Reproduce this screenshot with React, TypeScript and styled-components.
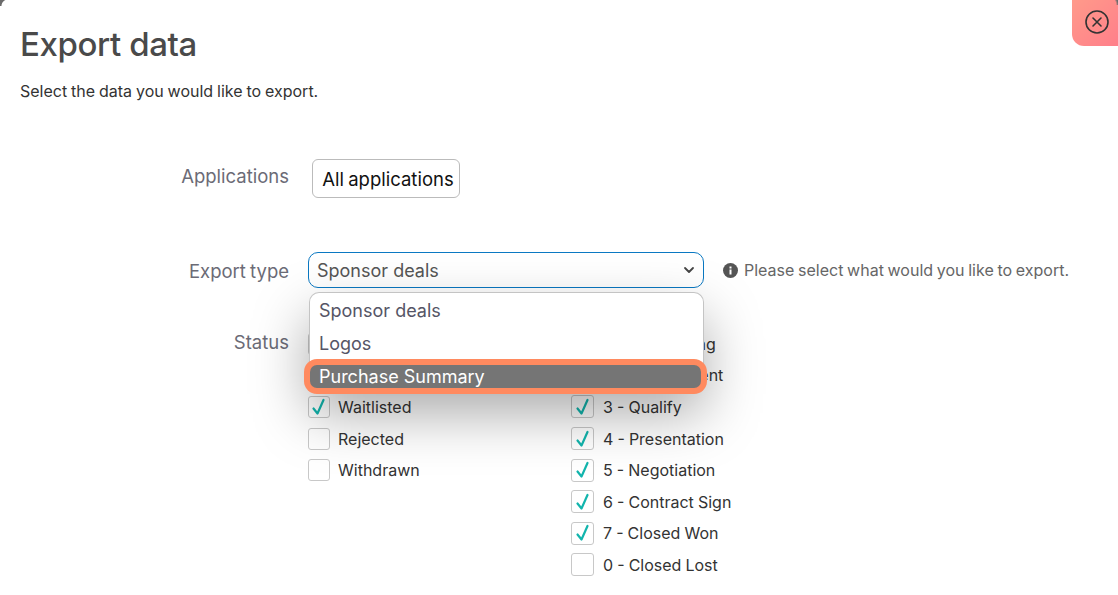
import React from 'react';
import styled, { createGlobalStyle } from 'styled-components';

const GlobalStyle = createGlobalStyle`
    html, body {
        margin: 0;
        padding: 0;
        height: 100%;
        background: #fff;
        overflow: hidden;
    }
    * {
        box-sizing: border-box;
    }
    body {
        font-family: Inter, "Liberation Sans", sans-serif;
    }
`;

const Modal = styled.div`
    position: relative;
    width: 1118px;
    height: 595px;
    background: #fff;
    overflow: hidden;
    padding: 22px 20px 0;

    &::before {
        content: '';
        position: absolute;
        top: 0;
        left: 0;
        width: 8px;
        height: 6px;
        background: radial-gradient(circle at 100% 100%, transparent 6px, #6b6b6b 7px);
    }
`;

const CloseButton = styled.button`
    position: absolute;
    top: 0;
    right: 0;
    width: 46px;
    height: 46px;
    border: 0;
    padding: 0 0 2px 4px;
    border-radius: 0 0 0 12px;
    background: linear-gradient(135deg, #ff9a8a 0%, #ff7f8a 100%);
    display: flex;
    align-items: center;
    justify-content: center;

    &::after {
        content: '';
        position: absolute;
        top: 0;
        right: 0;
        width: 10px;
        height: 5px;
        background: radial-gradient(circle at 0 100%, transparent 8px, #6b6b6b 10px);
    }
`;

const Title = styled.h1`
    margin: 0;
    font-size: 33px;
    line-height: 44px;
    font-weight: 500;
    letter-spacing: -0.4px;
    color: #4a4a4a;
`;

const Subtitle = styled.p`
    margin: 14px 0 0;
    font-size: 16px;
    line-height: 22px;
    word-spacing: -0.6px;
    color: #333;
`;

const Form = styled.div`
    margin-top: 57px;
    display: flex;
    flex-direction: column;
`;

const Row = styled.div<{ $height: number }>`
    display: grid;
    grid-template-columns: 269px 1fr;
    column-gap: 19px;
    min-height: ${(p) => p.$height}px;
`;

const Label = styled.div<{ $top: number }>`
    text-align: right;
    font-size: 18.5px;
    line-height: 24px;
    word-spacing: -1px;
    padding-top: ${(p) => p.$top}px;
    color: #6b6b76;
`;

const AppsButton = styled.div`
    margin-left: 4px;
    width: 148px;
    height: 39px;
    padding: 1px 0 0 4px;
    border: 1px solid #bbb;
    border-radius: 6px;
    display: flex;
    align-items: center;
    justify-content: center;
    font-size: 18.5px;
    word-spacing: -1px;
    color: #111;
`;

const ExportControl = styled.div`
    position: relative;
    height: 36px;
    display: flex;
    align-items: center;
`;

const SelectBox = styled.div`
    width: 396px;
    height: 36px;
    border: 1px solid #0a78c2;
    border-radius: 10px;
    padding: 0 8px;
    display: flex;
    align-items: center;
    justify-content: space-between;
    font-size: 18px;
    color: #555;
    background: #fff;
`;

const Hint = styled.div`
    margin-left: 19px;
    display: flex;
    align-items: center;
    gap: 6px;
    font-size: 16px;
    word-spacing: -0.8px;
    color: #666;
`;

const Dropdown = styled.div`
    position: absolute;
    top: 40px;
    left: 1px;
    width: 395px;
    height: 97px;
    padding-top: 1px;
    border: 1px solid #c4c4c4;
    border-bottom: 0;
    border-radius: 10px 10px 0 0;
    background: #fff;
    box-shadow: 0 24px 56px rgba(0, 0, 0, 0.34);
    z-index: 2;
`;

const Option = styled.div`
    height: 33px;
    padding: 0 9px;
    display: flex;
    align-items: center;
    font-size: 18px;
    color: #555566;
`;

const ActiveOption = styled.div`
    position: absolute;
    left: 0;
    right: 2px;
    top: 72px;
    height: 23px;
    padding: 0 9px;
    display: flex;
    align-items: center;
    font-size: 18px;
    color: #fff;
    background: #757575;
    border-radius: 7px;
    box-shadow: 0 0 0 6px #ff8a5f;
`;

const StatusColumns = styled.div`
    display: grid;
    grid-template-columns: 263px 1fr;
`;

const CheckList = styled.div<{ $box: number; $gap: number }>`
    display: flex;
    flex-direction: column;

    > div {
        gap: ${(p) => p.$gap}px;
    }

    > div > span {
        width: ${(p) => p.$box}px;
        height: ${(p) => p.$box}px;
    }
`;

const CheckRow = styled.div`
    height: 31.6px;
    display: flex;
    align-items: center;
    font-size: 16px;
    word-spacing: -0.4px;
    color: #333;
`;

const Box = styled.span`
    flex: none;
    display: flex;
    align-items: center;
    justify-content: center;
    border: 1px solid #c8c8c8;
    border-radius: 3px;
    background: #fff;
`;

const Tick = () => (
    <svg width="18" height="18" viewBox="0 0 18 18" fill="none">
        <path d="M3.5 10.5 L7.5 15.5 L13.5 2" stroke="#12b5ad" strokeWidth="2.2" strokeLinecap="round" strokeLinejoin="round" />
    </svg>
);

const left = [
    { text: 'Submitted', checked: true },
    { text: 'Approved', checked: true },
    { text: 'Waitlisted', checked: true },
    { text: 'Rejected', checked: false },
    { text: 'Withdrawn', checked: false },
];

const right = [
    { text: '1 - Prospecting', checked: true },
    { text: '2 - Engagement', checked: true },
    { text: '3 - Qualify', checked: true },
    { text: '4 - Presentation', checked: true },
    { text: '5 - Negotiation', checked: true },
    { text: '6 - Contract Sign', checked: true },
    { text: '7 - Closed Won', checked: true },
    { text: '0 - Closed Lost', checked: false },
];

const renderChecks = (items: { text: string; checked: boolean }[]) =>
    items.map(({ text, checked }) => (
        <CheckRow key={text}>
            <Box>{checked && <Tick />}</Box>
            {text}
        </CheckRow>
    ));

const App = () => {
    return (
        <Modal>
            <GlobalStyle />
            <CloseButton aria-label="Close">
                <svg width="26" height="26" viewBox="0 0 26 26" fill="none" stroke="#333" strokeWidth="1.6" strokeLinecap="round">
                    <circle cx="13" cy="13" r="11" />
                    <path d="M9 9 L17 17 M17 9 L9 17" />
                </svg>
            </CloseButton>
            <Title>Export data</Title>
            <Subtitle>Select the data you would like to export.</Subtitle>
            <Form>
                <Row $height={93}>
                    <Label $top={5}>Applications</Label>
                    <div>
                        <AppsButton>All applications</AppsButton>
                    </div>
                </Row>
                <Row $height={76}>
                    <Label $top={7}>Export type</Label>
                    <ExportControl>
                        <SelectBox>
                            Sponsor deals
                            <svg width="12" height="12" viewBox="0 0 12 12" fill="none" stroke="#444" strokeWidth="1.8" strokeLinecap="round" strokeLinejoin="round">
                                <path d="M2 4 L6 8 L10 4" />
                            </svg>
                        </SelectBox>
                        <Hint>
                            <svg width="15" height="15" viewBox="0 0 15 15">
                                <circle cx="7.5" cy="7.5" r="7.5" fill="#555" />
                                <rect x="6.5" y="6.5" width="2" height="5" fill="#fff" />
                                <rect x="6.5" y="3.5" width="2" height="2" fill="#fff" />
                            </svg>
                            Please select what would you like to export.
                        </Hint>
                        <Dropdown>
                            <Option>Sponsor deals</Option>
                            <Option>Logos</Option>
                            <ActiveOption>Purchase Summary</ActiveOption>
                        </Dropdown>
                    </ExportControl>
                </Row>
                <Row $height={260}>
                    <Label $top={2}>Status</Label>
                    <StatusColumns>
                        <CheckList $box={22} $gap={8}>{renderChecks(left)}</CheckList>
                        <CheckList $box={23} $gap={9}>{renderChecks(right)}</CheckList>
                    </StatusColumns>
                </Row>
            </Form>
        </Modal>
    );
};

export default App;
